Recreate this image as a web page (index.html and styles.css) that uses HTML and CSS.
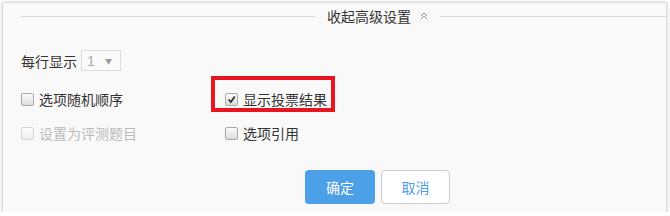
FILE: index.html
```html
<!DOCTYPE html>
<html lang="zh-CN">
<head>
    <meta charset="UTF-8">
    <title>高级设置</title>
    <link rel="stylesheet" href="styles.css">
</head>
<body>
    <div class="panel">
        <div class="fold-bar">
            <span class="fold-line fold-line-left"></span>
            <span class="fold-text">收起高级设置</span>
            <svg class="fold-icon" width="8" height="8" viewBox="0 0 8 8">
                <polyline points="1,4 4,1 7,4" fill="none" stroke="#999" stroke-width="1"/>
                <polyline points="1,7 4,4 7,7" fill="none" stroke="#999" stroke-width="1"/>
            </svg>
            <span class="fold-line fold-line-right"></span>
        </div>

        <div class="per-row">
            <span>每行显示</span>
            <span class="select-box">
                <span class="select-value">1</span>
                <span class="select-arrow">&#9660;</span>
            </span>
        </div>

        <div class="option-grid">
            <label class="option">
                <span class="check"></span>
                <span>选项随机顺序</span>
            </label>
            <label class="option marked">
                <span class="check checked">
                    <svg width="9" height="9" viewBox="0 0 9 9">
                        <polyline points="1.5,4.5 3.8,7 7.8,1.5" fill="none" stroke="#333" stroke-width="1.8"/>
                    </svg>
                </span>
                <span>显示投票结果</span>
            </label>
            <label class="option disabled">
                <span class="check"></span>
                <span>设置为评测题目</span>
            </label>
            <label class="option">
                <span class="check"></span>
                <span>选项引用</span>
            </label>
        </div>

        <div class="actions">
            <button class="btn btn-primary">确定</button>
            <button class="btn btn-default">取消</button>
        </div>
    </div>
</body>
</html>
```

FILE: styles.css
```css
body {
    margin: 0;
    background: #fff;
    font-family: "Noto Sans CJK SC", "Liberation Sans", sans-serif;
    font-size: 14px;
    color: #333;
}
.panel {
    margin: 3px 0 0 3px;
    width: 663px;
    height: 209px;
    box-sizing: border-box;
    padding: 3px 0 0 18px;
    background: #f9f9f9;
    box-shadow: 0 0 3px 1px rgba(0,0,0,0.22);
}
.fold-bar {
    display: flex;
    align-items: center;
    height: 20px;
}
.fold-line {
    height: 1px;
    background: #dcdcdc;
}
.fold-line-left {
    width: 294px;
}
.fold-line-right {
    flex: 1;
}
.fold-text {
    margin-left: 12px;
    line-height: 20px;
    color: #333;
}
.fold-icon {
    margin: 0 12px 0 9px;
}
.per-row {
    display: flex;
    align-items: center;
    gap: 4px;
    margin-top: 24px;
    height: 21px;
}
.select-box {
    display: flex;
    align-items: center;
    justify-content: space-between;
    width: 40px;
    height: 21px;
    box-sizing: border-box;
    padding: 0 8px 0 5px;
    border: 1px solid #ddd;
    background: #fafafa;
}
.select-value {
    color: #aaa;
    font-family: "Liberation Sans", sans-serif;
    font-size: 14px;
}
.select-arrow {
    color: #999;
    font-size: 7px;
}
.option-grid {
    display: grid;
    grid-template-columns: 204px 204px;
    row-gap: 13px;
    margin-top: 18px;
}
.option {
    position: relative;
    display: flex;
    align-items: center;
    gap: 5px;
    height: 21px;
    line-height: 21px;
}
.option.disabled {
    color: #bbb;
}
.check {
    display: flex;
    align-items: center;
    justify-content: center;
    width: 13px;
    height: 13px;
    box-sizing: border-box;
    border: 1px solid #a9a9a9;
    border-radius: 2px;
    background: linear-gradient(#fcfcfc, #dcdcdc);
}
.disabled .check {
    border-color: #d6d6d6;
    background: linear-gradient(#fdfdfd, #eee);
}
.marked::after {
    content: "";
    position: absolute;
    left: -14px;
    top: -13px;
    width: 124px;
    height: 36px;
    box-sizing: border-box;
    border: 4px solid #e8141f;
}
.actions {
    display: flex;
    gap: 6px;
    margin: 26px 0 0 284px;
}
.btn {
    width: 70px;
    height: 34px;
    border-radius: 4px;
    font-family: "Noto Sans CJK SC", sans-serif;
    font-size: 14px;
    cursor: pointer;
}
.btn-primary {
    border: none;
    background: #4ba0e8;
    color: #fff;
}
.btn-default {
    width: 69px;
    border: 1px solid #ccc;
    background: #fff;
    color: #4ba0e8;
}
```
